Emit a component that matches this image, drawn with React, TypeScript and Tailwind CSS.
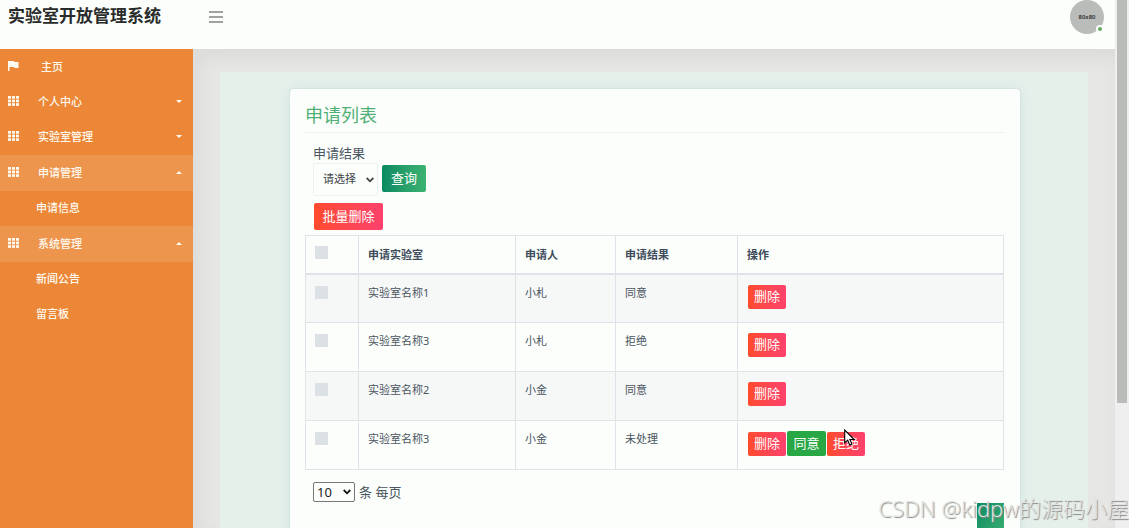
import React from "react";

type Item = { label: string; open?: boolean; children?: string[] };

const groups: Item[] = [
  { label: "个人中心" },
  { label: "实验室管理" },
  { label: "申请管理", open: true, children: ["申请信息"] },
  { label: "系统管理", open: true, children: ["新闻公告", "留言板"] },
];

const rows = [
  { lab: "实验室名称1", person: "小札", result: "同意" },
  { lab: "实验室名称3", person: "小札", result: "拒绝" },
  { lab: "实验室名称2", person: "小金", result: "同意" },
  { lab: "实验室名称3", person: "小金", result: "未处理", pending: true },
];

function GridIcon() {
  return (
    <svg viewBox="0 0 11 10" className="mb-[3px] h-[10px] w-[11px] shrink-0" fill="currentColor" aria-hidden="true">
      {[0, 4, 8].map((x) =>
        [0, 3.6, 7.2].map((y) => <rect key={`${x}-${y}`} x={x} y={y} width="3" height="2.7" />)
      )}
    </svg>
  );
}

function FlagIcon() {
  return (
    <svg viewBox="0 0 11 10" className="mb-[3px] h-[10px] w-[11px] shrink-0" fill="currentColor" aria-hidden="true">
      <path d="M0 0h6l.5 1H10.500V7H6.300L5.800 6H1.500V10H0z" />
    </svg>
  );
}

function Caret({ up }: { up?: boolean }) {
  return (
    <svg viewBox="0 0 6 3" className="mb-[2px] h-[3px] w-[6px]" fill="currentColor" aria-hidden="true">
      <path d={up ? "M0 3h6L3 0z" : "M0 0h6L3 3z"} />
    </svg>
  );
}

function Chevron({ className }: { className: string }) {
  return (
    <svg viewBox="0 0 8 6" className={className} fill="none" stroke="currentColor" strokeWidth="1.8" aria-hidden="true">
      <path d="M0.700 1L4 4.300L7.300 1" />
    </svg>
  );
}

function Tick({ label }: { label: string }) {
  return (
    <input
      type="checkbox"
      aria-label={label}
      className="block size-[13px] appearance-none bg-[#dce1e6] checked:bg-[#009060]"
    />
  );
}

function Sidebar() {
  return (
    <nav className="w-[193px] shrink-0 bg-[#eb8736] pt-px text-[11px] font-medium text-[#fffaf0]">
      <a href="#home" className="flex h-[35px] items-center pl-2">
        <FlagIcon />
        <span className="pl-[22px]">主页</span>
      </a>
      {groups.map((g) => (
        <div key={g.label}>
          <button
            type="button"
            aria-expanded={!!g.open}
            className={`flex w-full items-center pr-[11px] pl-2 text-left ${g.open ? "h-9 bg-[#ed944d]" : "h-[35px]"}`}
          >
            <GridIcon />
            <span className="flex-1 pl-[19px]">{g.label}</span>
            <Caret up={g.open} />
          </button>
          {g.children?.map((c) => (
            <a key={c} href="#list" className="flex h-[35px] items-center pl-9">
              {c}
            </a>
          ))}
        </div>
      ))}
    </nav>
  );
}

const danger =
  "rounded-[2px] bg-linear-to-r from-[#ff4b2b] to-[#ff416c] text-white";

function ApplicationTable() {
  const cell = "border border-[#dee2e9] px-[9px]";
  return (
    <table className="w-full table-fixed border-collapse text-left text-[11px] text-[#4a5561]">
      <colgroup>
        <col className="w-[53px]" />
        <col className="w-[157px]" />
        <col className="w-[100px]" />
        <col className="w-[122px]" />
        <col />
      </colgroup>
      <thead>
        <tr className="h-[38px] border-b-2 border-[#dee2e9] text-[#3e4b5b]">
          <th className={cell}>
            <div className="pb-1"><Tick label="全选" /></div>
          </th>
          <th className={`${cell} pt-[2px]`}>申请实验室</th>
          <th className={`${cell} pt-[2px]`}>申请人</th>
          <th className={`${cell} pt-[2px]`}>申请结果</th>
          <th className={`${cell} pt-[2px]`}>操作</th>
        </tr>
      </thead>
      <tbody>
        {rows.map((r, i) => (
          <tr key={i} className="h-[49px] align-top odd:bg-[#f6f7f7]">
            <td className={`${cell} pt-[11px]`}><Tick label={`选择${r.lab}`} /></td>
            <td className={`${cell} pt-[10px]`}>{r.lab}</td>
            <td className={`${cell} pt-[10px]`}>{r.person}</td>
            <td className={`${cell} pt-[10px]`}>{r.result}</td>
            <td className={`${cell} pt-[10px]`}>
              <div className="flex items-center gap-px pl-px text-[13px]">
                <button type="button" className={`h-6 w-[38px] ${danger}`}>删除</button>
                {r.pending && (
                  <>
                    <button type="button" className="h-[25px] w-[39px] rounded-[2px] bg-[#28a745] text-white">同意</button>
                    <button type="button" className={`h-6 w-[38px] ${danger}`}>拒绝</button>
                  </>
                )}
              </div>
            </td>
          </tr>
        ))}
      </tbody>
    </table>
  );
}

export default function App() {
  return (
    <div className="relative flex h-screen overflow-hidden bg-[#e6e7e5] font-['Noto_Sans','Noto_Sans_CJK_SC',sans-serif] leading-normal">
      <div className="flex min-w-0 flex-1 flex-col">
        <header className="flex h-[49px] shrink-0 items-start bg-[#fbfefb]">
          <h1 className="w-[209px] pt-1 pl-2 text-[17px] leading-6 font-bold whitespace-nowrap text-[#2a2c2b]">
            实验室开放管理系统
          </h1>
          <button type="button" aria-label="菜单" className="mt-[11px] flex w-[14px] flex-col gap-[3px]">
            <span className="h-[2px] w-full bg-[#a0a2a0]" />
            <span className="h-[2px] w-full bg-[#a0a2a0]" />
            <span className="h-[2px] w-full bg-[#a0a2a0]" />
          </button>
          <div className="relative mr-[11px] ml-auto flex size-[34px] items-center justify-center rounded-full bg-[#babcba] text-[6px] font-semibold text-[#333]">
            80x80
            <span className="absolute right-0 bottom-px size-[8px] rounded-full border-2 border-[#fbfefb] bg-[#66a860]" />
          </div>
        </header>
        <div className="flex min-h-0 flex-1">
          <Sidebar />
          <main className="min-w-0 flex-1 overflow-hidden px-[27px] pt-[23px] shadow-[inset_6px_8px_18px_rgba(0,0,0,0.05)]">
            <div className="min-h-full bg-[#e6f0eb] pt-[17px] pr-[68px] pl-[70px]">
              <section className="rounded-[3px] bg-[#fbfefb] pr-4 pb-8 pl-[15px] shadow-[0_0_14px_rgba(130,190,200,0.22),0_0_1px_rgba(90,120,160,0.5)]">
                <h2 className="border-b border-[#eef1f0] pt-[13px] pb-[3px] text-[18px] leading-[27px] text-[#4fb075]">
                  申请列表
                </h2>
                <form className="pt-[10px] pl-2 text-[13px] text-[#4a5561]" onSubmit={(e) => e.preventDefault()}>
                  <label htmlFor="result" className="block leading-5">申请结果</label>
                  <div className="flex items-start gap-1">
                    <div className="relative">
                      <select id="result" className="block h-[33px] w-[65px] appearance-none rounded-[2px] border border-[#edf1f0] bg-transparent pl-[9px] text-[11px] text-[#3e444a]">
                        <option>请选择</option>
                      </select>
                      <Chevron className="pointer-events-none absolute top-[14px] right-1 h-[6px] w-2 text-[#444]" />
                    </div>
                    <button type="submit" className="mt-[2px] h-[27px] w-11 rounded-[2px] bg-linear-to-r from-[#078a62] to-[#3cb371] text-white">
                      查询
                    </button>
                  </div>
                  <button type="button" className={`mt-[7px] mb-[5px] ml-px block h-[27px] w-[69px] ${danger}`}>
                    批量删除
                  </button>
                </form>
                <ApplicationTable />
                <div className="flex items-start pt-3 pl-2 text-[13px] text-[#4a5561]">
                  <div className="relative">
                    <select id="size" className="block h-5 w-[42px] appearance-none rounded-[2px] border border-[#767676] bg-transparent pl-[3px] text-[13px] leading-4 text-[#222]">
                      <option>10</option>
                    </select>
                    <Chevron className="pointer-events-none absolute top-[7px] right-1 h-[6px] w-2 text-[#111]" />
                  </div>
                  <label htmlFor="size" className="pl-1 leading-5">条 每页</label>
                </div>
                <div className="flex justify-end pt-px">
                  <button type="button" aria-label="当前页" className="h-9 w-[27px] bg-linear-to-br from-[#078a62] to-[#3cb371]" />
                </div>
              </section>
            </div>
          </main>
        </div>
      </div>
      <div className="w-[14px] shrink-0 bg-[#eeefee] px-[2px]" aria-hidden="true">
        <div className="h-[403px] bg-[#babcba]" />
      </div>
      <p className="pointer-events-none absolute right-0 bottom-1 z-20 text-[22px] leading-8 font-light text-[#e2e4e2] [text-shadow:1px_1px_1px_#888]">
        CSDN @kidpw的源码小屋
      </p>
      <svg viewBox="0 0 12 18" className="pointer-events-none absolute top-[429px] left-[844px] z-20 h-[18px] w-3" aria-hidden="true">
        <path d="M.7 1v13l3-2.800 2 4.800 2.200-1-2-4.500h4.300z" fill="#fff" stroke="#000" strokeWidth="1.100" />
      </svg>
    </div>
  );
}
